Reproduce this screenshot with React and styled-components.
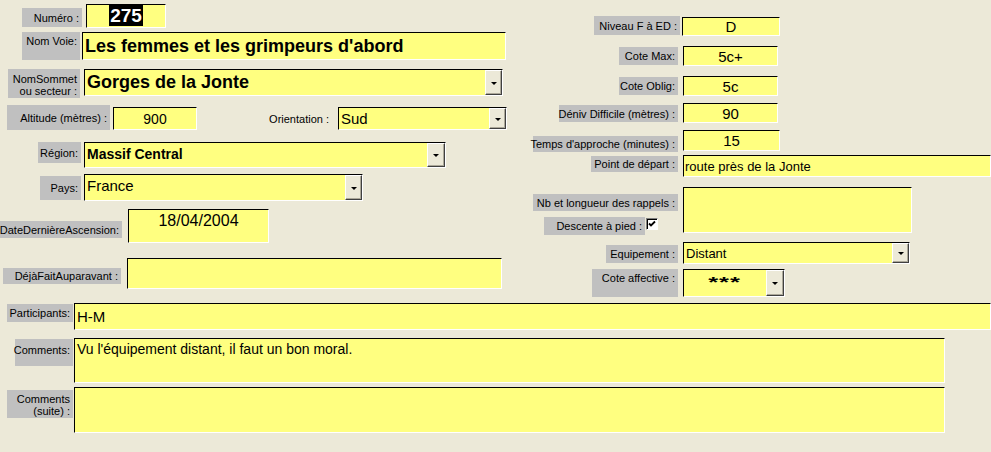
import styled, { createGlobalStyle } from 'styled-components';

const GlobalStyle = createGlobalStyle`
  html, body { margin: 0; padding: 0; background: #ece9d8; }
  body { font-family: "Liberation Sans", Arial, sans-serif; color: #000; }
`;

const Ecran = styled.div`
  width: 991px;
  height: 452px;
  overflow: hidden;
  background: #ece9d8;
  display: flex;
  flex-direction: column;
`;

const Haut = styled.div`
  display: flex;
  height: 303px;
  flex-shrink: 0;
`;

const Gauche = styled.div`
  width: 520px;
  flex-shrink: 0;
  display: flex;
  flex-direction: column;
  padding-top: 4px;
  box-sizing: border-box;
`;

const Droite = styled.div`
  flex: 1;
  min-width: 0;
  display: flex;
  flex-direction: column;
  padding-top: 16px;
  box-sizing: border-box;
`;

const Bas = styled.div`
  display: flex;
  flex-direction: column;
`;

const Ligne = styled.div`
  display: flex;
  align-items: flex-start;
  flex-shrink: 0;
  height: ${p => (p.$h ? p.$h + 'px' : 'auto')};
  padding-left: ${p => p.$pl || 0}px;
  gap: ${p => p.$gap ?? 3}px;
`;

const Cellule = styled.div`
  width: ${p => p.$w}px;
  flex-shrink: 0;
  display: flex;
  flex-direction: column;
  align-items: flex-end;
`;

const Etiquette = styled.div`
  box-sizing: border-box;
  flex-shrink: 0;
  width: ${p => p.$w}px;
  height: ${p => p.$h}px;
  margin-top: ${p => p.$mt || 0}px;
  background: #c0c0c0;
  font-size: 11px;
  line-height: 12px;
  text-align: right;
  white-space: nowrap;
  padding: ${p => p.$pt ?? 0}px 3px 0;
  display: flex;
  justify-content: flex-end;
  align-items: ${p => (p.$pt != null ? 'flex-start' : 'center')};
`;

const TexteLibre = styled.div`
  width: ${p => p.$w}px;
  height: ${p => p.$h}px;
  margin-top: ${p => p.$mt || 0}px;
  flex-shrink: 0;
  box-sizing: border-box;
  padding-right: 6px;
  font-size: 11px;
  display: flex;
  align-items: center;
  justify-content: flex-end;
`;

const Champ = styled.div`
  box-sizing: border-box;
  flex-shrink: 0;
  width: ${p => p.$w}px;
  height: ${p => p.$h}px;
  margin-top: ${p => p.$mt || 0}px;
  background: #ffff80;
  border: 1px solid;
  border-color: #000 #fff #fff #000;
  display: flex;
  align-items: ${p => (p.$haut ? 'flex-start' : 'center')};
  font-size: ${p => p.$fs || 14}px;
  font-weight: ${p => (p.$gras ? 700 : 400)};
  overflow: hidden;
  white-space: nowrap;
`;

const Valeur = styled.span`
  flex: 1;
  min-width: 0;
  text-align: ${p => (p.$centre ? 'center' : 'left')};
  padding: ${p => p.$pt || 0}px 2px 0 ${p => p.$pl ?? 2}px;
`;

const Selection = styled.span`
  background: #000;
  color: #fff;
  font-size: 19px;
  font-weight: 700;
  line-height: 20px;
  padding: 0 1px;
`;

const Etoiles = styled.span`
  display: inline-block;
  transform: scaleX(1.7);
  letter-spacing: 0.5px;
`;

const Fleche = styled.div`
  align-self: stretch;
  width: ${p => p.$w || 17}px;
  flex-shrink: 0;
  box-sizing: border-box;
  background: #ece9d8;
  border: 1px solid;
  border-color: #fff #404040 #404040 #fff;
  box-shadow: inset -1px -1px 0 #aca899;
  display: flex;
  align-items: center;
  justify-content: center;
  &::after {
    content: '';
    border-left: 3px solid transparent;
    border-right: 3px solid transparent;
    border-top: 3px solid #000;
    margin-top: 1px;
  }
`;

const SousLigne = styled.div`
  display: flex;
  align-items: flex-start;
  gap: 1px;
  margin-top: ${p => p.$mt || 0}px;
  margin-right: ${p => p.$mr || 0}px;
`;

const Case = styled.div`
  width: 12px;
  height: 12px;
  margin-top: 1px;
  box-sizing: border-box;
  background: #fff;
  border: 1px solid;
  border-color: #808080 #fff #fff #808080;
  box-shadow: inset 1px 1px 0 #000;
  display: flex;
  align-items: center;
  justify-content: center;
`;

function Combo({ children, fleche, ...props }) {
  return (
    <Champ {...props}>
      {children}
      <Fleche $w={fleche} />
    </Champ>
  );
}

export default function App() {
  return (
    <>
      <GlobalStyle />
      <Ecran>
        <Haut>
          <Gauche>
            <Ligne $h={28} $pl={22} $gap={4}>
              <Etiquette $w={60} $h={19} $mt={4}>Numéro :</Etiquette>
              <Champ $w={80} $h={24}>
                <Valeur $centre>
                  <Selection>275</Selection>
                </Valeur>
              </Champ>
            </Ligne>
            <Ligne $h={37} $pl={22} $gap={2}>
              <Etiquette $w={58} $h={28} $pt={3}>Nom Voie:</Etiquette>
              <Champ $w={424} $h={28} $fs={18} $gras>
                <Valeur $pl={2}>Les femmes et les grimpeurs d'abord</Valeur>
              </Champ>
            </Ligne>
            <Ligne $h={36} $pl={8} $gap={4}>
              <Etiquette $w={72} $h={29} $pt={4}>
                <span>NomSommet<br />ou secteur :</span>
              </Etiquette>
              <Combo $w={419} $h={27} $fs={18} $gras>
                <Valeur $pl={2}>Gorges de la Jonte</Valeur>
              </Combo>
            </Ligne>
            <Ligne $h={37} $pl={7} $gap={3}>
              <Etiquette $w={103} $h={25}>Altitude (mètres) :</Etiquette>
              <Champ $w={84} $h={23} $mt={2}>
                <Valeur $centre>900</Valeur>
              </Champ>
              <TexteLibre $w={135} $h={23} $mt={2}>Orientation :</TexteLibre>
              <Combo $w={169} $h={23} $mt={2} $fs={15}>
                <Valeur $pl={2}>Sud</Valeur>
              </Combo>
            </Ligne>
            <Ligne $h={32} $pl={38} $gap={3}>
              <Etiquette $w={43} $h={21}>Région:</Etiquette>
              <Combo $w={362} $h={26} $gras $haut fleche={18}>
                <Valeur $pl={2} $pt={3}>Massif Central</Valeur>
              </Combo>
            </Ligne>
            <Ligne $h={34} $pl={40} $gap={3}>
              <Etiquette $w={41} $h={24} $mt={2}>Pays:</Etiquette>
              <Combo $w={279} $h={27} $fs={15} $haut>
                <Valeur $pl={2} $pt={2}>France</Valeur>
              </Combo>
            </Ligne>
            <Ligne $h={50} $pl={0} $gap={6}>
              <Etiquette $w={122} $h={17} $mt={13}>DateDernièreAscension:</Etiquette>
              <Champ $w={141} $h={34} $mt={1} $fs={16} $haut>
                <Valeur $centre $pt={2}>18/04/2004</Valeur>
              </Champ>
            </Ligne>
            <Ligne $pl={3} $gap={6}>
              <Etiquette $w={118} $h={16} $mt={10}>DéjàFaitAuparavant :</Etiquette>
              <Champ $w={375} $h={31} />
            </Ligne>
          </Gauche>

          <Droite>
            <Ligne $h={30} $gap={2}>
              <Cellule $w={160}>
                <Etiquette $w={86} $h={19}>Niveau F à ED :</Etiquette>
              </Cellule>
              <Champ $w={98} $h={19} $mt={1} $fs={15}>
                <Valeur $centre>D</Valeur>
              </Champ>
            </Ligne>
            <Ligne $h={30} $gap={5}>
              <Cellule $w={158}>
                <Etiquette $w={59} $h={18} $mt={1}>Cote Max:</Etiquette>
              </Cellule>
              <Champ $w={95} $h={20} $fs={15}>
                <Valeur $centre>5c+</Valeur>
              </Champ>
            </Ligne>
            <Ligne $h={27} $gap={5}>
              <Cellule $w={158}>
                <Etiquette $w={59} $h={18} $mt={1}>Cote Oblig:</Etiquette>
              </Cellule>
              <Champ $w={95} $h={20} $fs={15}>
                <Valeur $centre>5c</Valeur>
              </Champ>
            </Ligne>
            <Ligne $h={27} $gap={5}>
              <Cellule $w={158}>
                <Etiquette $w={119} $h={17} $mt={2}>Déniv Difficile (mètres) :</Etiquette>
              </Cellule>
              <Champ $w={95} $h={20} $fs={15}>
                <Valeur $centre>90</Valeur>
              </Champ>
            </Ligne>
            <Ligne $h={25} $gap={5}>
              <Cellule $w={158}>
                <Etiquette $w={145} $h={16} $mt={6}>Temps d'approche (minutes) :</Etiquette>
              </Cellule>
              <Champ $w={97} $h={21} $fs={15}>
                <Valeur $centre>15</Valeur>
              </Champ>
            </Ligne>
            <Ligne $h={32} $gap={5}>
              <Cellule $w={158}>
                <Etiquette $w={87} $h={16} $mt={1}>Point de départ :</Etiquette>
              </Cellule>
              <Champ $w={308} $h={22} $fs={13}>
                <Valeur $pl={1}>route près de la Jonte</Valeur>
              </Champ>
            </Ligne>
            <Ligne $h={55} $gap={5}>
              <Cellule $w={158}>
                <Etiquette $w={145} $h={17} $mt={7}>Nb et longueur des rappels :</Etiquette>
                <SousLigne $mt={6} $mr={20}>
                  <Etiquette $w={101} $h={18}>Descente à pied :</Etiquette>
                  <Case>
                    <svg width="8" height="8" viewBox="0 0 8 8">
                      <path d="M1 3.5 L3 5.5 L7 1.5" stroke="#000" strokeWidth="1.8" fill="none" />
                    </svg>
                  </Case>
                </SousLigne>
              </Cellule>
              <Champ $w={229} $h={46} />
            </Ligne>
            <Ligne $h={27} $gap={5}>
              <Cellule $w={158}>
                <Etiquette $w={72} $h={18} $mt={3}>Equipement :</Etiquette>
              </Cellule>
              <Combo $w={227} $h={22} $fs={13}>
                <Valeur $pl={2}>Distant</Valeur>
              </Combo>
            </Ligne>
            <Ligne $gap={5}>
              <Cellule $w={158}>
                <Etiquette $w={86} $h={28} $pt={3}>Cote affective :</Etiquette>
              </Cellule>
              <Combo $w={102} $h={28} $fs={15} $gras $haut fleche={18}>
                <Valeur $centre $pt={3}>
                  <Etoiles>***</Etoiles>
                </Valeur>
              </Combo>
            </Ligne>
          </Droite>
        </Haut>

        <Bas>
          <Ligne $h={35} $gap={1}>
            <Cellule $w={73}>
              <Etiquette $w={66} $h={18} $mt={1}>Participants:</Etiquette>
            </Cellule>
            <Champ $w={917} $h={27} $fs={15}>
              <Valeur $pl={2}>H-M</Valeur>
            </Champ>
          </Ligne>
          <Ligne $h={49} $gap={1}>
            <Cellule $w={73}>
              <Etiquette $w={58} $h={27} $mt={1} $pt={5}>Comments:</Etiquette>
            </Cellule>
            <Champ $w={871} $h={45} $haut>
              <Valeur $pl={2} $pt={2}>Vu l'équipement distant, il faut un bon moral.</Valeur>
            </Champ>
          </Ligne>
          <Ligne $gap={1}>
            <Cellule $w={73}>
              <Etiquette $w={66} $h={28} $mt={3} $pt={3}>
                <span>Comments<br />(suite) :</span>
              </Etiquette>
            </Cellule>
            <Champ $w={871} $h={46} />
          </Ligne>
        </Bas>
      </Ecran>
    </>
  );
}
